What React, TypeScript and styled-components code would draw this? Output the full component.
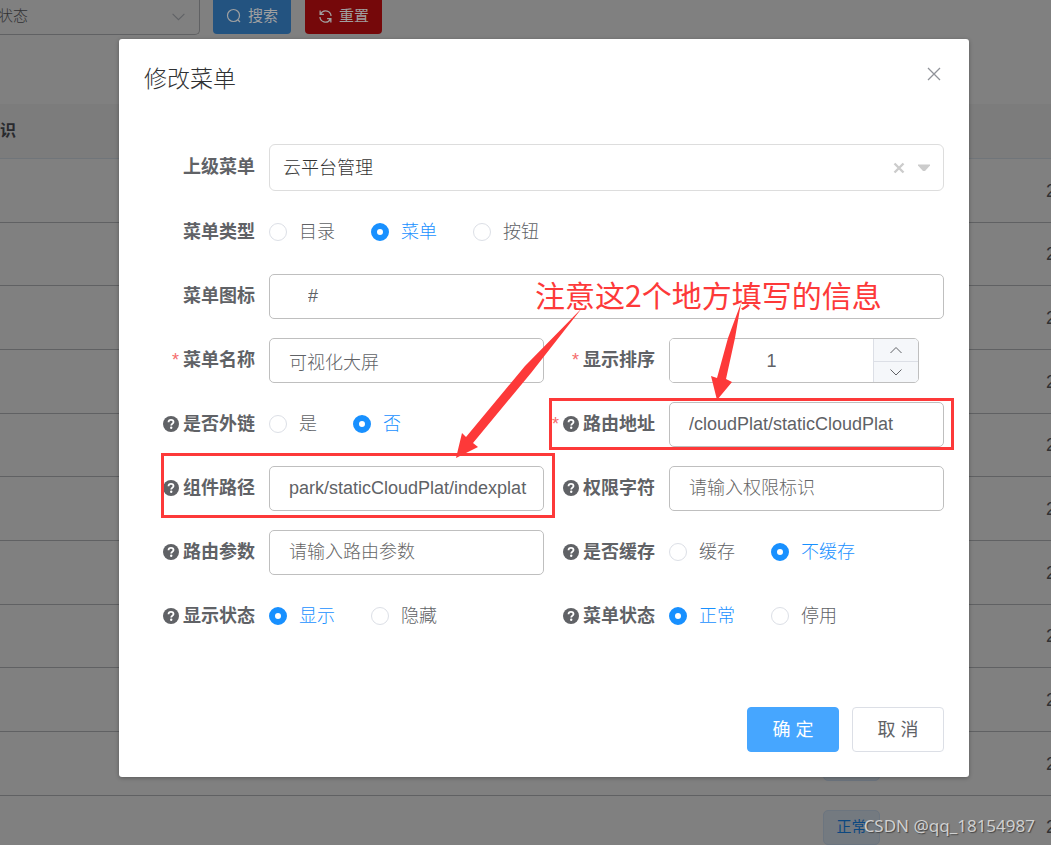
import React from 'react';
import styled, { createGlobalStyle, css } from 'styled-components';

const Global = createGlobalStyle`
  *, *::before, *::after { box-sizing: border-box; }
  body {
    margin: 0;
    background: #808080;
    color: #606266;
    font-family: "Liberation Sans", "Noto Sans CJK SC", sans-serif;
    font-size: 18px;
    line-height: 24px;
  }
  button, input, select { font: inherit; }
`;

const Page = styled.div`
  position: relative;
  height: 100vh;
  overflow: hidden;
  background: #808080;
`;

const Toolbar = styled.div`
  display: flex;
  align-items: flex-start;
  height: 104px;
  font-size: 15px;
`;

const FilterBox = styled.label`
  display: flex;
  align-items: center;
  width: 200px;
  height: 35px;
  padding: 0 13px 2px 0;
  margin-right: 13px;
  border: 1px solid #606163;
  border-width: 0 1px 1px 0;
  border-radius: 0 0 5px 0;
`;

const FilterSelect = styled.select`
  flex: 1;
  margin-left: -2px;
  padding: 0;
  border: 0;
  background: transparent;
  color: #303133;
  font-weight: 300;
  appearance: none;
`;

const ToolButton = styled.button<{ $color: string }>`
  display: flex;
  align-items: center;
  gap: 6px;
  height: 34px;
  margin-right: 14px;
  padding: 0 13px 2px;
  border: 0;
  border-radius: 0 0 4px 4px;
  background: ${(p) => p.$color};
  color: #a0a0a0;
`;

const Grid = styled.table`
  width: 100%;
  table-layout: fixed;
  border-collapse: separate;
  border-spacing: 0;
  text-align: left;
  color: #303133;

  th, td {
    padding: 0;
    border-bottom: 1px solid #606163;
    white-space: nowrap;
  }
  th {
    height: 55px;
    background: #7c7c7c;
    border-color: #70757a;
    font-size: 16px;
    color: #292a2e;
  }
  td { height: 64px; }
  tr:nth-child(3n + 2) td { height: 63px; }
`;

const TagCol = styled.col` width: 223px; `;
const DateCol = styled.col` width: 5px; `;

const Tag = styled.span`
  display: flex;
  align-items: center;
  justify-content: center;
  width: 57px;
  height: 35px;
  border: 1px solid #6c757f;
  border-radius: 5px;
  background: #747a80;
  color: #0c4880;
  font-size: 15px;
`;

const Overlay = styled.div`
  position: absolute;
  inset: 0;
  display: flex;
  align-items: flex-start;
  padding: 39px 82px 0 119px;
`;

const Dialog = styled.section`
  flex: 1;
  padding: 25px;
  border-radius: 3px;
  background: #fff;
  box-shadow: 0 1px 4px rgba(0, 0, 0, 0.3);
`;

const DialogHead = styled.header`
  display: flex;
  justify-content: space-between;
  align-items: flex-start;
  height: 80px;
`;

const Title = styled.h2`
  margin: 0;
  font-size: 23px;
  line-height: 30px;
  font-weight: 300;
  color: #303133;
`;

const IconButton = styled.button`
  display: flex;
  padding: 3px;
  border: 0;
  background: transparent;
  color: #909399;
`;

const Form = styled.form`
  position: relative;
  display: grid;
  grid-template-columns: 1fr 1fr;
  row-gap: 19px;
`;

const FieldRow = styled.div<{ $wide?: boolean; $mark?: string }>`
  position: relative;
  display: flex;
  align-items: center;
  min-height: 45px;
  ${(p) => p.$wide && css`grid-column: 1 / -1;`}
  ${(p) => p.$mark && css`
    &::after {
      content: "";
      position: absolute;
      inset: ${p.$mark};
      border: 3px solid #fd3939;
      pointer-events: none;
    }
  `}
`;

const Label = styled.label`
  display: flex;
  flex: none;
  align-items: center;
  justify-content: flex-end;
  gap: 4px;
  width: 125px;
  padding: 0 14px 2px 0;
  font-weight: 700;
  white-space: nowrap;
`;

const Star = styled.span`
  color: #f56c6c;
  font-weight: 400;
`;

const TextInput = styled.input<{ $indent?: boolean }>`
  flex: 1;
  min-width: 0;
  height: 45px;
  padding: 0 12px 0 ${(p) => (p.$indent ? 38 : 19)}px;
  border: 1px solid #bfbfbf;
  border-radius: 5px;
  background: #fff;
  color: #606266;
  font-weight: 300;
  outline: 0;
  &::placeholder { color: #666; opacity: 1; }
`;

const TreeBox = styled.div`
  display: flex;
  flex: 1;
  align-items: center;
  gap: 12px;
  height: 47px;
  padding: 0 12px 0 13px;
  border: 1px solid #ddd;
  border-radius: 6px;
`;

const TreeInput = styled.input`
  flex: 1;
  min-width: 0;
  padding: 0;
  border: 0;
  outline: 0;
  color: #333;
  font-weight: 300;
`;

const NumberBox = styled.div`
  display: flex;
  width: 250px;
  height: 45px;
  border: 1px solid #bfbfbf;
  border-radius: 5px;
  overflow: hidden;
`;

const NumberInput = styled.input`
  flex: 1;
  min-width: 0;
  padding: 0;
  border: 0;
  outline: 0;
  text-align: center;
  color: #606266;
`;

const Steps = styled.div`
  display: grid;
  grid-template-rows: 1fr 1fr;
  width: 45px;
  border-left: 1px solid #dcdfe6;
  background: #f5f7fa;
`;

const StepButton = styled.button`
  display: flex;
  align-items: center;
  justify-content: center;
  padding: 0;
  border: 0;
  background: transparent;
  color: #606266;
  & + & { border-top: 1px solid #dcdfe6; }
`;

const Radios = styled.div`
  display: flex;
  gap: 36px;
  padding-bottom: 2px;
`;

const RadioLabel = styled.label`
  display: flex;
  align-items: center;
  gap: 12px;
  font-weight: 300;
  white-space: nowrap;
  &:has(input:checked) { color: #1890ff; }
`;

const Radio = styled.input`
  width: 18px;
  height: 18px;
  margin: 0;
  border: 1px solid #dcdfe6;
  border-radius: 50%;
  background: #fff;
  appearance: none;
  &:checked { border: 6px solid #1890ff; }
`;

const Footer = styled.footer`
  display: flex;
  justify-content: flex-end;
  gap: 13px;
  padding-top: 68px;
`;

const Action = styled.button<{ $primary?: boolean }>`
  width: 92px;
  height: 45px;
  padding: 0;
  border: 1px solid ${(p) => (p.$primary ? '#46a6ff' : '#dcdfe6')};
  border-radius: 4px;
  background: ${(p) => (p.$primary ? '#46a6ff' : '#fff')};
  color: ${(p) => (p.$primary ? '#fff' : '#606266')};
`;

const Arrows = styled.svg`
  position: absolute;
  top: 156px;
  left: 300px;
  pointer-events: none;
`;

const Note = styled.p`
  position: absolute;
  top: 130px;
  left: 391px;
  margin: 0;
  color: #fd3939;
  font-family: "Noto Sans CJK SC", sans-serif;
  font-size: 30px;
  line-height: 40px;
  white-space: nowrap;
  pointer-events: none;
`;

const Watermark = styled.span`
  position: absolute;
  right: 16px;
  bottom: 7px;
  color: #d0d0d0;
  font-family: "Noto Sans", sans-serif;
  font-size: 17px;
  text-shadow: 1px 1px 1px #444;
`;

const HelpIcon = () => (
  <svg width="16" height="16" viewBox="0 0 16 16" aria-hidden="true">
    <circle cx="8" cy="8" r="8" fill="#606266" />
    <path d="M5.500 6.200C5.600 4.500 6.700 3.900 8 3.900s2.500.8 2.500 2.200c0 1.700-2.300 1.600-2.300 3.300" fill="none" stroke="#fff" strokeWidth="1.800" />
    <circle cx="8.200" cy="11.700" r="1.200" fill="#fff" />
  </svg>
);

const Chevron = ({ up, size = 14 }: { up?: boolean; size?: number }) => (
  <svg width={size} height={size} viewBox="0 0 14 14" fill="none" stroke="currentColor" aria-hidden="true">
    <path d={up ? 'M1.5 10 7 4.5l5.5 5.5' : 'M1.5 4.5 7 10l5.5-5.5'} />
  </svg>
);

const Caption = ({ id, text, star, help }: { id?: string; text: string; star?: boolean; help?: boolean }) => (
  <Label as={id ? 'label' : 'span'} htmlFor={id}>
    {star && <Star>*</Star>}
    {help && <HelpIcon />}
    {text}
  </Label>
);

type FieldProps = {
  id: string; text: string; value?: string; hint?: string;
  star?: boolean; help?: boolean; wide?: boolean; mark?: string; indent?: boolean;
};

const TextField = ({ id, text, value, hint, star, help, wide, mark, indent }: FieldProps) => (
  <FieldRow $wide={wide} $mark={mark}>
    <Caption id={id} text={text} star={star} help={help} />
    <TextInput id={id} defaultValue={value} placeholder={hint} $indent={indent} />
  </FieldRow>
);

type RadioProps = { name: string; text: string; options: string[]; checked: number; help?: boolean; wide?: boolean };

const RadioField = ({ name, text, options, checked, help, wide }: RadioProps) => (
  <FieldRow $wide={wide} role="radiogroup" aria-label={text}>
    <Caption text={text} help={help} />
    <Radios>
      {options.map((o, i) => (
        <RadioLabel key={o}>
          <Radio type="radio" name={name} defaultChecked={i === checked} />
          {o}
        </RadioLabel>
      ))}
    </Radios>
  </FieldRow>
);

const rows = Array.from({ length: 11 }, (_, i) => i);

export default function App() {
  return (
    <Page>
      <Global />
      <Toolbar>
        <FilterBox>
          <FilterSelect aria-label="状态"><option>状态</option></FilterSelect>
          <Chevron size={15} />
        </FilterBox>
        <ToolButton $color="#235380">
          <svg width="16" height="16" viewBox="0 0 16 16" fill="none" stroke="currentColor" strokeWidth="1.200" aria-hidden="true">
            <circle cx="7.500" cy="7.500" r="6" /><path d="m12 12 2 2" />
          </svg>
          搜索
        </ToolButton>
        <ToolButton $color="#75080a">
          <svg width="15" height="15" viewBox="0 0 14 14" fill="none" stroke="currentColor" strokeWidth="1.200" aria-hidden="true">
            <path d="M2 1.500V5h3.500M2.300 4.800C3.500 2.400 6 1.300 8.500 2c2 .6 3.500 2.400 3.700 4.500M12 12.500V9H8.500M11.700 9.200C10.500 11.600 8 12.700 5.500 12 3.500 11.400 2 9.600 1.800 7.500" />
          </svg>
          重置
        </ToolButton>
      </Toolbar>
      <Grid>
        <colgroup><col /><TagCol /><DateCol /></colgroup>
        <thead><tr><th>识</th><th /><th /></tr></thead>
        <tbody>
          {rows.map((r) => (
            <tr key={r}><td /><td><Tag>正常</Tag></td><td>2</td></tr>
          ))}
        </tbody>
      </Grid>

      <Overlay>
        <Dialog role="dialog" aria-labelledby="dialog-title">
          <DialogHead>
            <Title id="dialog-title">修改菜单</Title>
            <IconButton aria-label="关闭">
              <svg width="14" height="14" viewBox="0 0 14 14" stroke="currentColor" strokeWidth="1.300" aria-hidden="true">
                <path d="m1 1 12 12M13 1 1 13" />
              </svg>
            </IconButton>
          </DialogHead>
          <Form>
            <FieldRow $wide>
              <Caption id="parent" text="上级菜单" />
              <TreeBox>
                <TreeInput id="parent" defaultValue="云平台管理" />
                <svg width="38" height="12" viewBox="0 0 38 12" aria-hidden="true">
                  <path d="m1.500 1.500 9 9M10.500 1.500l-9 9" stroke="#ccc" strokeWidth="2.400" />
                  <path d="M25 2.500h12v1l-5 5.500h-2l-5-5.500z" fill="#ccc" />
                </svg>
              </TreeBox>
            </FieldRow>
            <RadioField wide name="type" text="菜单类型" options={['目录', '菜单', '按钮']} checked={1} />
            <TextField wide indent id="icon" text="菜单图标" value="#" />
            <TextField star id="name" text="菜单名称" value="可视化大屏" />
            <FieldRow>
              <Caption star id="order" text="显示排序" />
              <NumberBox>
                <NumberInput id="order" defaultValue="1" />
                <Steps>
                  <StepButton type="button" aria-label="增加"><Chevron up /></StepButton>
                  <StepButton type="button" aria-label="减少"><Chevron /></StepButton>
                </Steps>
              </NumberBox>
            </FieldRow>
            <RadioField help name="link" text="是否外链" options={['是', '否']} checked={1} />
            <TextField star help id="route" text="路由地址" value="/cloudPlat/staticCloudPlat" mark="-4px -10px -3px 5px" />
            <TextField help id="component" text="组件路径" value="park/staticCloudPlat/indexplat" mark="-13px -11px -7px 17px" />
            <TextField help id="perms" text="权限字符" hint="请输入权限标识" />
            <TextField help id="query" text="路由参数" hint="请输入路由参数" />
            <RadioField help name="cache" text="是否缓存" options={['缓存', '不缓存']} checked={1} />
            <RadioField help name="visible" text="显示状态" options={['显示', '隐藏']} checked={0} />
            <RadioField help name="status" text="菜单状态" options={['正常', '停用']} checked={0} />
            <Arrows width="310" height="170" viewBox="444 300 310 170" fill="#fd3939" aria-hidden="true">
              <path d="M582 308 525 366 466 437 462 433 456 458 478 447 473 443 531 373z" />
              <path d="M741 303 728 338 717 378 711 376 717 400 732 382 726 379 735 338z" />
            </Arrows>
            <Note>注意这2个地方填写的信息</Note>
          </Form>
          <Footer>
            <Action $primary>确 定</Action>
            <Action>取 消</Action>
          </Footer>
        </Dialog>
      </Overlay>
      <Watermark>CSDN @qq_18154987</Watermark>
    </Page>
  );
}
